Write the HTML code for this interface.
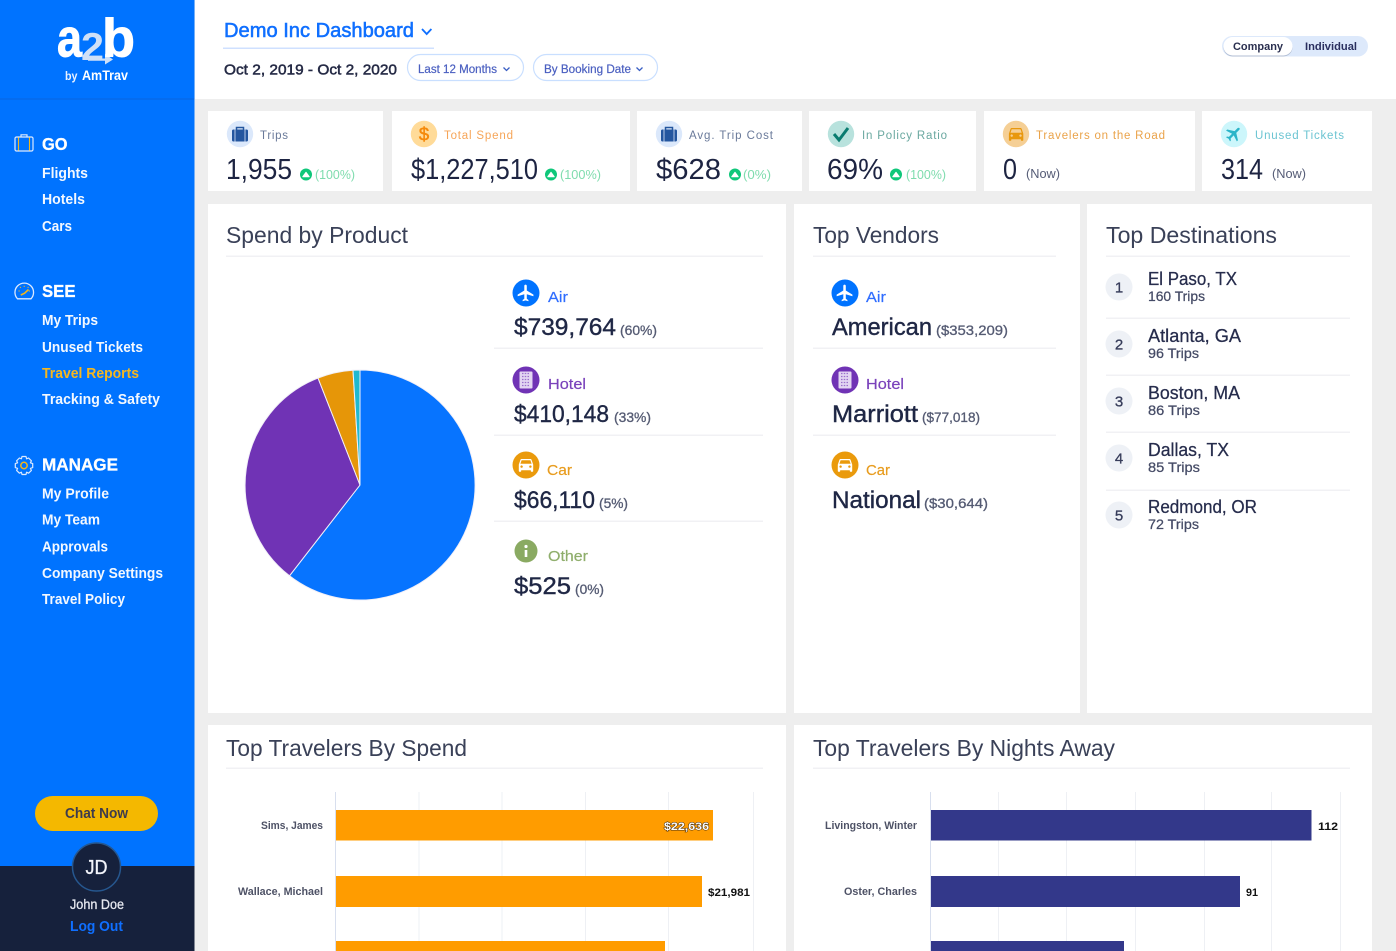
<!DOCTYPE html>
<html lang="en"><head><meta charset="utf-8"><title>Demo Inc Dashboard</title>
<style>
html,body{margin:0;padding:0;width:1396px;height:951px;overflow:hidden;background:#eee}
svg{display:block;filter:blur(.3px)}
text{font-family:"Liberation Sans",sans-serif;white-space:pre}
.b{font-weight:700}
.w{fill:#fff}
.sb{font-size:14.5px;font-weight:700;fill:#f3f8ff}
.hd{font-size:17.5px;font-weight:700;fill:#fff;stroke:#fff;stroke-width:.3px}
.t{font-size:23px;fill:#3a4158}
.lb{font-size:11.5px}
.v{font-size:28.5px;fill:#1d2442}
.up{font-size:13px;fill:#7fdcae}
.now{font-size:13px;fill:#555c76}
.val{font-size:24px;fill:#1f2745;stroke:#1f2745;stroke-width:.4px}
.pc{font-size:14px;fill:#555b73;stroke:#555b73;stroke-width:.3px}
.city{font-size:18px;fill:#262c4c;stroke:#262c4c;stroke-width:.25px}
.sub{font-size:14px;fill:#454b66;stroke:#454b66;stroke-width:.25px}
.num{font-size:15px;fill:#363c5a;text-anchor:middle;stroke:#363c5a;stroke-width:.3px}
.cl{font-size:11px;font-weight:700;fill:#4e5266}
.dv{font-size:11px;font-weight:700;fill:#111}
</style></head>
<body>
<svg xmlns="http://www.w3.org/2000/svg" width="1396" height="951" viewBox="0 0 1396 951">
<defs>
<path id="pl" d="M21 16v-2l-8-5V3.500c0-.83-.67-1.500-1.500-1.500S10 2.670 10 3.500V9l-8 5v2l8-2.500V19l-2 1.500V22l3.500-1 3.500 1v-1.500L13 19v-5.500l8 2.500z"/>
<path id="car" d="M18.920 6.010C18.720 5.420 18.160 5 17.500 5h-11c-.66 0-1.210.42-1.420 1.010L3 12v8c0 .55.45 1 1 1h1c.55 0 1-.45 1-1v-1h12v1c0 .55.45 1 1 1h1c.55 0 1-.45 1-1v-8l-2.080-5.990zM6.500 16c-.83 0-1.500-.67-1.500-1.500S5.670 13 6.500 13s1.500.67 1.500 1.500S7.330 16 6.500 16zm11 0c-.83 0-1.500-.67-1.500-1.500s.67-1.500 1.500-1.500 1.500.67 1.500 1.500-.67 1.500-1.500 1.500zM5 11l1.500-4.500h11L19 11H5z"/>
<g id="bag"><path d="M-3.500-5.500V-7.500h7v2" fill="none" stroke="#24569f" stroke-width="1.500"/><rect x="-8" y="-5.500" width="16" height="12" rx="1.500" fill="#24569f"/><path d="M-5-5.500V6.500M5-5.500V6.500" stroke="#dbe8fb" stroke-width=".8"/></g>
<g id="upi"><circle r="6" fill="#0fc77a"/><path d="M-3.200 2.200L0-2.200 3.200 2.200z" fill="#fff" stroke="#fff" stroke-linejoin="round"/></g>
<g id="air"><circle r="13.500" fill="#0073ff"/><use href="#pl" transform="translate(-10 -10) scale(.83)" fill="#fff"/></g>
<g id="hot"><circle r="13.500" fill="#7033b5"/><rect x="-6.500" y="-8.500" width="13" height="17" rx="1" fill="#e3d6f2"/><path d="M-4-6.500h8M-4-3.500h8M-4-.5h8M-4 2.500h8M-4 5.500h8" stroke="#9a70cc" stroke-width="1.200" stroke-dasharray="1.500 1.250"/></g>
<g id="cr"><circle r="13.500" fill="#ea9a0c"/><use href="#car" transform="translate(-9.600 -10) scale(.8)" fill="#fff"/></g>
</defs>

<!-- base -->
<rect width="1396" height="951" fill="#eeeeee"/>
<rect x="195" y="0" width="1201" height="99" fill="#fff"/>

<!-- sidebar -->
<rect x="0" y="0" width="194.500" height="951" fill="#0073ff"/>
<rect x="0" y="98.500" width="194.500" height="1" fill="#0a66df"/>
<rect x="0" y="866" width="194.500" height="85" fill="#16213c"/>

<!-- logo -->
<text x="81" y="60" font-size="39" class="b" fill="#cfe0f7" textLength="23" lengthAdjust="spacingAndGlyphs">2</text>
<path d="M88 58.500H105V54L113 59.500 105 64.500V60.800H88z" fill="#cfe0f7"/>
<text x="57" y="56.500" font-size="54" class="b w" style="stroke:#fff;stroke-width:.9px" textLength="25" lengthAdjust="spacingAndGlyphs">a</text>
<text x="102" y="56.500" font-size="54" class="b w" style="stroke:#fff;stroke-width:.9px" textLength="33" lengthAdjust="spacingAndGlyphs">b</text>
<text x="65" y="80" font-size="12" class="b" fill="#eaf2ff" textLength="12.500" lengthAdjust="spacingAndGlyphs">by</text>
<text x="82" y="80" font-size="14" class="b w" textLength="46" lengthAdjust="spacingAndGlyphs">AmTrav</text>

<!-- GO -->
<g fill="none" stroke="#dbe9ff" stroke-width="1.200"><rect x="15" y="137" width="18" height="14" rx="1.500"/><path d="M21 137v-2.200h6V137"/></g>
<path d="M18.500 137.500v13M29.500 137.500v13" stroke="#f3b61a" stroke-width="1.100"/>
<text x="42" y="150" class="hd" textLength="25.500" lengthAdjust="spacingAndGlyphs">GO</text>
<text x="42" y="178" class="sb" textLength="46" lengthAdjust="spacingAndGlyphs">Flights</text>
<text x="42" y="204" class="sb" textLength="43" lengthAdjust="spacingAndGlyphs">Hotels</text>
<text x="42" y="231" class="sb" textLength="30" lengthAdjust="spacingAndGlyphs">Cars</text>

<!-- SEE -->
<path d="M17.500 298.800h13.500a9.300 9.300 0 1 0-13.500 0z" fill="none" stroke="#dbe9ff" stroke-width="1.300"/>
<path d="M24.200 285.800v1.200M18.500 291h1.200M30 291h-1.200M20 287l.8.8M28.500 287l-.8.8" stroke="#f3b61a" stroke-width="1"/>
<path d="M20.800 295l3.800-1.800 3.900-3.700" stroke="#f3b61a" stroke-width="1.600" fill="none"/>
<text x="42" y="297" class="hd" textLength="33.500" lengthAdjust="spacingAndGlyphs">SEE</text>
<text x="42" y="325" class="sb" textLength="56" lengthAdjust="spacingAndGlyphs">My Trips</text>
<text x="42" y="352" class="sb" textLength="101" lengthAdjust="spacingAndGlyphs">Unused Tickets</text>
<text x="42" y="378" class="sb" style="fill:#f5b71f" textLength="97" lengthAdjust="spacingAndGlyphs">Travel Reports</text>
<text x="42" y="404" class="sb" textLength="118" lengthAdjust="spacingAndGlyphs">Tracking &amp; Safety</text>

<!-- MANAGE -->
<circle cx="24" cy="465.500" r="3.200" fill="none" stroke="#f3b61a" stroke-width="1.500"/>
<path d="M22 456.500h4l.6 2.300 2-.8 2.800 2.800-1 2 2.300.8v4l-2.300.8 1 2-2.800 2.800-2-1-.6 2.300h-4l-.6-2.300-2 1-2.800-2.800 1-2-2.300-.8v-4l2.300-.8-1-2 2.800-2.800 2 .8z" fill="none" stroke="#dbe9ff" stroke-width="1.200" stroke-linejoin="round"/>
<text x="42" y="470.500" class="hd" textLength="76" lengthAdjust="spacingAndGlyphs">MANAGE</text>
<text x="42" y="498.500" class="sb" textLength="67" lengthAdjust="spacingAndGlyphs">My Profile</text>
<text x="42" y="524.500" class="sb" textLength="58" lengthAdjust="spacingAndGlyphs">My Team</text>
<text x="42" y="551.500" class="sb" textLength="66" lengthAdjust="spacingAndGlyphs">Approvals</text>
<text x="42" y="578" class="sb" textLength="121" lengthAdjust="spacingAndGlyphs">Company Settings</text>
<text x="42" y="604" class="sb" textLength="83" lengthAdjust="spacingAndGlyphs">Travel Policy</text>

<!-- chat + user -->
<rect x="35" y="796" width="123" height="35" rx="17.500" fill="#f4b800"/>
<text x="65" y="818" font-size="14.500" class="b" fill="#3d3b4d" textLength="63" lengthAdjust="spacingAndGlyphs">Chat Now</text>
<circle cx="96.500" cy="867" r="24" fill="#16213c" stroke="#26578f" stroke-width="1.500"/>
<text x="85.500" y="874" font-size="20" fill="#f2f4fa" style="stroke:#f2f4fa;stroke-width:.3px" textLength="22" lengthAdjust="spacingAndGlyphs">JD</text>
<text x="70" y="909" font-size="14" fill="#e6e8ef" style="stroke:#e6e8ef;stroke-width:.3px" textLength="54" lengthAdjust="spacingAndGlyphs">John Doe</text>
<text x="70" y="931" font-size="14.500" class="b" fill="#0f6fff" textLength="53" lengthAdjust="spacingAndGlyphs">Log Out</text>

<!-- header -->
<text x="224" y="37" font-size="20.500" fill="#0f6fff" style="stroke:#0f6fff;stroke-width:.55px" textLength="190" lengthAdjust="spacingAndGlyphs">Demo Inc Dashboard</text>
<path d="M422 29l4.700 5 4.700-5" fill="none" stroke="#0f6fff" stroke-width="1.800"/>
<rect x="223" y="47.500" width="211" height="1.500" fill="#cfe0ff"/>
<text x="224" y="74.500" font-size="15" fill="#252a45" style="stroke:#252a45;stroke-width:.5px" textLength="173" lengthAdjust="spacingAndGlyphs">Oct 2, 2019 - Oct 2, 2020</text>
<rect x="407.500" y="54.500" width="116" height="26" rx="13" fill="#fff" stroke="#c9dfff" stroke-width="1.200"/>
<text x="418" y="73" font-size="11.500" fill="#4a5fc0" style="stroke:#4a5fc0;stroke-width:.2px" textLength="79" lengthAdjust="spacingAndGlyphs">Last 12 Months</text>
<path d="M503.500 67.500l3 3 3-3" fill="none" stroke="#3a5fc4" stroke-width="1.300"/>
<rect x="533.500" y="54.500" width="124" height="26" rx="13" fill="#fff" stroke="#c9dfff" stroke-width="1.200"/>
<text x="544" y="73" font-size="11.500" fill="#4a5fc0" style="stroke:#4a5fc0;stroke-width:.2px" textLength="87" lengthAdjust="spacingAndGlyphs">By Booking Date</text>
<path d="M636.500 67.500l3 3 3-3" fill="none" stroke="#3a5fc4" stroke-width="1.300"/>

<!-- toggle -->
<rect x="1222" y="36" width="146" height="20.500" rx="10.200" fill="#dde9fb"/>
<rect x="1223.500" y="37" width="69" height="18.500" rx="9.200" fill="#8d99b3" opacity=".55" transform="translate(0 1)"/>
<rect x="1223.500" y="37" width="69" height="18.500" rx="9.200" fill="#fff"/>
<text x="1233" y="50" font-size="11" class="b" fill="#2a2f4f" textLength="50" lengthAdjust="spacingAndGlyphs">Company</text>
<text x="1305" y="50" font-size="11" class="b" fill="#2a2f5f" textLength="52" lengthAdjust="spacingAndGlyphs">Individual</text>

<!-- KPI cards -->
<g fill="#fff">
<rect x="208" y="111" width="175" height="80"/>
<rect x="392" y="111" width="238" height="80"/>
<rect x="637" y="111" width="165" height="80"/>
<rect x="809" y="111" width="167" height="80"/>
<rect x="984" y="111" width="211" height="80"/>
<rect x="1202" y="111" width="170" height="80"/>
</g>

<circle cx="240" cy="134" r="13.200" fill="#dbe8fb"/><use href="#bag" x="240" y="135"/>
<text x="260" y="139" class="lb" fill="#6a7a9a" textLength="28" lengthAdjust="spacing">Trips</text>
<text x="226" y="179" class="v" textLength="66" lengthAdjust="spacingAndGlyphs">1,955</text>
<use href="#upi" x="306" y="174.500"/><text x="315" y="179" class="up" textLength="40" lengthAdjust="spacingAndGlyphs">(100%)</text>

<circle cx="424" cy="134" r="13.200" fill="#ffdb99"/>
<text x="424" y="140.500" font-size="18.500" text-anchor="middle" fill="#f58a0b" style="stroke:#f58a0b;stroke-width:.5px">$</text>
<text x="444" y="139" class="lb" fill="#f6a558" textLength="69" lengthAdjust="spacing">Total Spend</text>
<text x="411" y="179" class="v" textLength="127" lengthAdjust="spacingAndGlyphs">$1,227,510</text>
<use href="#upi" x="551" y="174.500"/><text x="560" y="179" class="up" textLength="41" lengthAdjust="spacingAndGlyphs">(100%)</text>

<circle cx="669" cy="134" r="13.200" fill="#dbe8fb"/><use href="#bag" x="669" y="135"/>
<text x="689" y="139" class="lb" fill="#6a7a9a" textLength="84" lengthAdjust="spacing">Avg. Trip Cost</text>
<text x="656" y="179" class="v" textLength="65" lengthAdjust="spacingAndGlyphs">$628</text>
<use href="#upi" x="735" y="174.500"/><text x="743" y="179" class="up" textLength="28" lengthAdjust="spacingAndGlyphs">(0%)</text>

<circle cx="841" cy="134" r="13.200" fill="#b8e2dd"/>
<path d="M834 134l5 6 9-12" fill="none" stroke="#0a7c70" stroke-width="3"/>
<text x="862" y="139" class="lb" fill="#6aa8a0" textLength="85" lengthAdjust="spacing">In Policy Ratio</text>
<text x="827" y="179" class="v" textLength="56" lengthAdjust="spacingAndGlyphs">69%</text>
<use href="#upi" x="896" y="174.500"/><text x="906" y="179" class="up" textLength="40" lengthAdjust="spacingAndGlyphs">(100%)</text>

<circle cx="1016" cy="134" r="13.200" fill="#f5cf95"/>
<use href="#car" transform="translate(1006.500 124) scale(.8)" fill="#e8980e"/>
<text x="1036" y="139" class="lb" fill="#eaa34a" textLength="129" lengthAdjust="spacing">Travelers on the Road</text>
<text x="1003" y="179" class="v" textLength="14" lengthAdjust="spacingAndGlyphs">0</text>
<text x="1026" y="178" class="now" textLength="34" lengthAdjust="spacingAndGlyphs">(Now)</text>

<circle cx="1234" cy="134" r="13.200" fill="#ccf6fb"/>
<use href="#pl" transform="translate(1234 134) rotate(45) translate(-9.600 -9.600) scale(.8)" fill="#2bb4c8"/>
<text x="1255" y="139" class="lb" fill="#6cc4d2" textLength="89" lengthAdjust="spacing">Unused Tickets</text>
<text x="1221" y="179" class="v" textLength="42" lengthAdjust="spacingAndGlyphs">314</text>
<text x="1272" y="178" class="now" textLength="34" lengthAdjust="spacingAndGlyphs">(Now)</text>

<!-- main cards -->
<g fill="#fff">
<rect x="208" y="204" width="578" height="509"/>
<rect x="794" y="204" width="286" height="509"/>
<rect x="1087" y="204" width="285" height="509"/>
<rect x="208" y="725" width="578" height="226"/>
<rect x="794" y="725" width="578" height="226"/>
</g>

<text x="226" y="243" class="t" textLength="182" lengthAdjust="spacingAndGlyphs">Spend by Product</text>
<text x="813" y="243" class="t" textLength="126" lengthAdjust="spacingAndGlyphs">Top Vendors</text>
<text x="1106" y="243" class="t" textLength="171" lengthAdjust="spacingAndGlyphs">Top Destinations</text>
<g fill="#f1f1f4">
<rect x="226" y="255.500" width="537" height="1.500"/>
<rect x="813" y="255.500" width="243" height="1.500"/>
<rect x="1106" y="255.500" width="244" height="1.500"/>
<rect x="494" y="347.500" width="269" height="1.500"/>
<rect x="494" y="434.500" width="269" height="1.500"/>
<rect x="494" y="520.500" width="269" height="1.500"/>
<rect x="813" y="347.500" width="243" height="1.500"/>
<rect x="813" y="434.500" width="243" height="1.500"/>
<rect x="1106" y="317.500" width="244" height="1.500"/>
<rect x="1106" y="374.500" width="244" height="1.500"/>
<rect x="1106" y="431.500" width="244" height="1.500"/>
<rect x="1106" y="489.500" width="244" height="1.500"/>
</g>

<!-- pie -->
<g stroke="#f2f0f8" stroke-width="1">
<path d="M360 485V370A115 115 0 1 1 289.500 575.800Z" fill="#0774ff"/>
<path d="M360 485L289.500 575.800A115 115 0 0 1 318 378Z" fill="#7033b5"/>
<path d="M360 485L318 378A115 115 0 0 1 353 370.200Z" fill="#e69608"/>
<path d="M360 485L353 370.200A115 115 0 0 1 360 370Z" fill="#1fb9cf"/>
</g>

<!-- spend list -->
<use href="#air" x="526" y="293"/>
<text x="548" y="302" font-size="15" fill="#2f6dff" style="stroke:#2f6dff;stroke-width:.2px" textLength="20" lengthAdjust="spacingAndGlyphs">Air</text>
<text x="514" y="335" class="val" textLength="102" lengthAdjust="spacingAndGlyphs">$739,764</text>
<text x="620" y="335" class="pc" textLength="37" lengthAdjust="spacingAndGlyphs">(60%)</text>

<use href="#hot" x="526" y="380"/>
<text x="548" y="389" font-size="15" fill="#7a42bb" style="stroke:#7a42bb;stroke-width:.2px" textLength="38" lengthAdjust="spacingAndGlyphs">Hotel</text>
<text x="514" y="422" class="val" textLength="95" lengthAdjust="spacingAndGlyphs">$410,148</text>
<text x="614" y="422" class="pc" textLength="37" lengthAdjust="spacingAndGlyphs">(33%)</text>

<use href="#cr" x="526" y="465"/>
<text x="547" y="475" font-size="15" fill="#e89c1e" style="stroke:#e89c1e;stroke-width:.2px" textLength="25" lengthAdjust="spacingAndGlyphs">Car</text>
<text x="514" y="508" class="val" textLength="81" lengthAdjust="spacingAndGlyphs">$66,110</text>
<text x="599" y="508" class="pc" textLength="29" lengthAdjust="spacingAndGlyphs">(5%)</text>

<circle cx="526" cy="551" r="11.500" fill="#8aaa62"/>
<rect x="524.700" y="550" width="2.600" height="7" fill="#fff"/><circle cx="526" cy="546.500" r="1.600" fill="#fff"/>
<text x="548" y="561" font-size="15" fill="#8fae6c" style="stroke:#8fae6c;stroke-width:.2px" textLength="40" lengthAdjust="spacingAndGlyphs">Other</text>
<text x="514" y="594" class="val" textLength="57" lengthAdjust="spacingAndGlyphs">$525</text>
<text x="575" y="594" class="pc" textLength="29" lengthAdjust="spacingAndGlyphs">(0%)</text>

<!-- vendors -->
<use href="#air" x="845" y="293"/>
<text x="866" y="302" font-size="15" fill="#2f6dff" style="stroke:#2f6dff;stroke-width:.2px" textLength="20" lengthAdjust="spacingAndGlyphs">Air</text>
<text x="832" y="335" class="val" textLength="100" lengthAdjust="spacingAndGlyphs">American</text>
<text x="936" y="335" class="pc" textLength="72" lengthAdjust="spacingAndGlyphs">($353,209)</text>

<use href="#hot" x="845" y="380"/>
<text x="866" y="389" font-size="15" fill="#7a42bb" style="stroke:#7a42bb;stroke-width:.2px" textLength="38" lengthAdjust="spacingAndGlyphs">Hotel</text>
<text x="832" y="422" class="val" textLength="86" lengthAdjust="spacingAndGlyphs">Marriott</text>
<text x="922" y="422" class="pc" textLength="58" lengthAdjust="spacingAndGlyphs">($77,018)</text>

<use href="#cr" x="845" y="465"/>
<text x="866" y="475" font-size="15" fill="#e89c1e" style="stroke:#e89c1e;stroke-width:.2px" textLength="24" lengthAdjust="spacingAndGlyphs">Car</text>
<text x="832" y="508" class="val" textLength="89" lengthAdjust="spacingAndGlyphs">National</text>
<text x="924" y="508" class="pc" textLength="64" lengthAdjust="spacingAndGlyphs">($30,644)</text>

<!-- destinations -->
<g fill="#eef1f6">
<circle cx="1119" cy="287" r="13.500"/><circle cx="1119" cy="344" r="13.500"/><circle cx="1119" cy="401" r="13.500"/><circle cx="1119" cy="458" r="13.500"/><circle cx="1119" cy="515" r="13.500"/>
</g>
<text x="1119" y="292.500" class="num">1</text>
<text x="1119" y="349.500" class="num">2</text>
<text x="1119" y="406.500" class="num">3</text>
<text x="1119" y="463.500" class="num">4</text>
<text x="1119" y="520.500" class="num">5</text>
<text x="1148" y="285" class="city" textLength="89" lengthAdjust="spacingAndGlyphs">El Paso, TX</text>
<text x="1148" y="301" class="sub" textLength="57" lengthAdjust="spacingAndGlyphs">160 Trips</text>
<text x="1148" y="342" class="city" textLength="93" lengthAdjust="spacingAndGlyphs">Atlanta, GA</text>
<text x="1148" y="358" class="sub" textLength="51" lengthAdjust="spacingAndGlyphs">96 Trips</text>
<text x="1148" y="399" class="city" textLength="92" lengthAdjust="spacingAndGlyphs">Boston, MA</text>
<text x="1148" y="415" class="sub" textLength="52" lengthAdjust="spacingAndGlyphs">86 Trips</text>
<text x="1148" y="456" class="city" textLength="81" lengthAdjust="spacingAndGlyphs">Dallas, TX</text>
<text x="1148" y="472" class="sub" textLength="52" lengthAdjust="spacingAndGlyphs">85 Trips</text>
<text x="1148" y="513" class="city" textLength="109" lengthAdjust="spacingAndGlyphs">Redmond, OR</text>
<text x="1148" y="529" class="sub" textLength="51" lengthAdjust="spacingAndGlyphs">72 Trips</text>

<!-- spend chart -->
<text x="226" y="756" class="t" textLength="241" lengthAdjust="spacingAndGlyphs">Top Travelers By Spend</text>
<rect x="226" y="767.500" width="537" height="1.500" fill="#f1f1f4"/>
<g fill="#eef0f4">
<rect x="418.500" y="792" width="1" height="159"/><rect x="501.500" y="792" width="1" height="159"/><rect x="585" y="792" width="1" height="159"/><rect x="668" y="792" width="1" height="159"/><rect x="753" y="792" width="1" height="159"/>
</g>
<rect x="335" y="792" width="1" height="159" fill="#d8dfee"/>
<g fill="#ff9c00">
<rect x="336" y="810" width="377" height="30.500"/>
<rect x="336" y="876" width="366" height="31"/>
<rect x="336" y="941" width="329" height="10"/>
</g>
<text x="261" y="829" class="cl" textLength="62" lengthAdjust="spacingAndGlyphs">Sims, James</text>
<text x="238" y="895" class="cl" textLength="85" lengthAdjust="spacingAndGlyphs">Wallace, Michael</text>
<text x="664" y="830" class="dv" style="fill:#fff;stroke:#4a3010;stroke-width:1px;paint-order:stroke" textLength="45" lengthAdjust="spacingAndGlyphs">$22,636</text>
<text x="708" y="896" class="dv" textLength="42" lengthAdjust="spacingAndGlyphs">$21,981</text>

<!-- nights chart -->
<text x="813" y="756" class="t" textLength="302" lengthAdjust="spacingAndGlyphs">Top Travelers By Nights Away</text>
<rect x="813" y="767.500" width="537" height="1.500" fill="#f1f1f4"/>
<g fill="#eef0f4">
<rect x="998" y="792" width="1" height="159"/><rect x="1066" y="792" width="1" height="159"/><rect x="1135" y="792" width="1" height="159"/><rect x="1204" y="792" width="1" height="159"/><rect x="1271" y="792" width="1" height="159"/><rect x="1340" y="792" width="1" height="159"/>
</g>
<rect x="930" y="792" width="1" height="159" fill="#d8dfee"/>
<g fill="#33388a">
<rect x="931" y="810" width="380.500" height="30.500"/>
<rect x="931" y="876" width="309" height="31"/>
<rect x="931" y="941" width="193" height="10"/>
</g>
<text x="825" y="829" class="cl" textLength="92" lengthAdjust="spacingAndGlyphs">Livingston, Winter</text>
<text x="844" y="895" class="cl" textLength="73" lengthAdjust="spacingAndGlyphs">Oster, Charles</text>
<text x="1318" y="830" class="dv" textLength="20" lengthAdjust="spacingAndGlyphs">112</text>
<text x="1246" y="896" class="dv" textLength="12" lengthAdjust="spacingAndGlyphs">91</text>
</svg>
</body></html>
